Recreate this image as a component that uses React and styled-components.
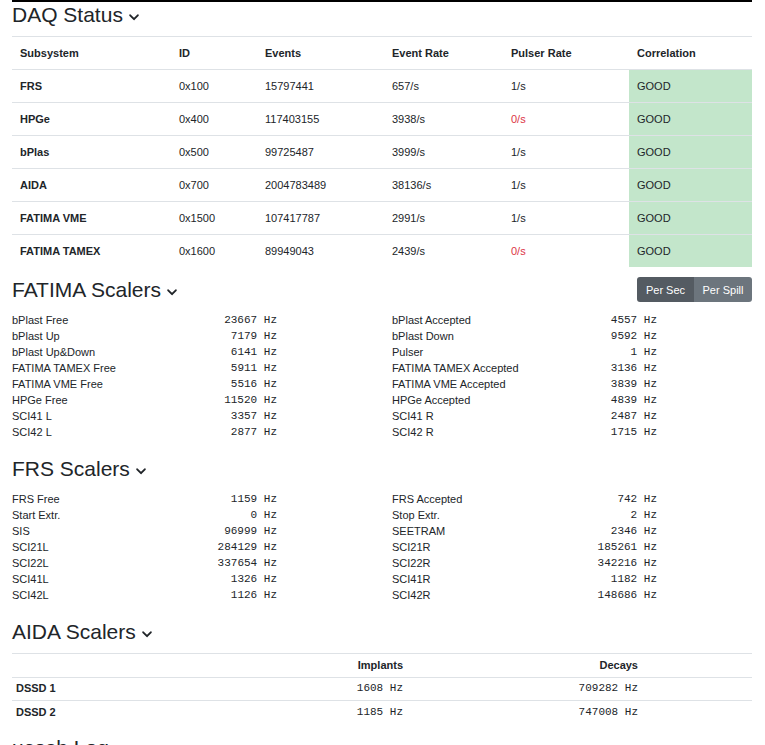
import React from 'react';
import styled, { createGlobalStyle } from 'styled-components';

const GlobalStyle = createGlobalStyle`
    body { margin: 0; background: #fff; color: #212529; font-family: "Liberation Sans", Arial, sans-serif; }
    * { box-sizing: border-box; }
`;

const daqRows = [
    { name: 'FRS', id: '0x100', events: '15797441', rate: '657/s', pulser: '1/s' },
    { name: 'HPGe', id: '0x400', events: '117403155', rate: '3938/s', pulser: '0/s' },
    { name: 'bPlas', id: '0x500', events: '99725487', rate: '3999/s', pulser: '1/s' },
    { name: 'AIDA', id: '0x700', events: '2004783489', rate: '38136/s', pulser: '1/s' },
    { name: 'FATIMA VME', id: '0x1500', events: '107417787', rate: '2991/s', pulser: '1/s' },
    { name: 'FATIMA TAMEX', id: '0x1600', events: '89949043', rate: '2439/s', pulser: '0/s' },
];

// pairs: left column, right column
const fatimaScalers = [
    ['bPlast Free', '23667'], ['bPlast Accepted', '4557'],
    ['bPlast Up', '7179'], ['bPlast Down', '9592'],
    ['bPlast Up&Down', '6141'], ['Pulser', '1'],
    ['FATIMA TAMEX Free', '5911'], ['FATIMA TAMEX Accepted', '3136'],
    ['FATIMA VME Free', '5516'], ['FATIMA VME Accepted', '3839'],
    ['HPGe Free', '11520'], ['HPGe Accepted', '4839'],
    ['SCI41 L', '3357'], ['SCI41 R', '2487'],
    ['SCI42 L', '2877'], ['SCI42 R', '1715'],
];

const frsScalers = [
    ['FRS Free', '1159'], ['FRS Accepted', '742'],
    ['Start Extr.', '0'], ['Stop Extr.', '2'],
    ['SIS', '96999'], ['SEETRAM', '2346'],
    ['SCI21L', '284129'], ['SCI21R', '185261'],
    ['SCI22L', '337654'], ['SCI22R', '342216'],
    ['SCI41L', '1326'], ['SCI41R', '1182'],
    ['SCI42L', '1126'], ['SCI42R', '148686'],
];

const aidaRows = [
    { name: 'DSSD 1', implants: '1608', decays: '709282' },
    { name: 'DSSD 2', implants: '1185', decays: '747008' },
];

const Chevron = () => (
    <ChevronSvg viewBox="0 0 10 7" width="10" height="7">
        <path d="M1.2 1.3 L5 5.2 L8.8 1.3" fill="none" stroke="#212529" strokeWidth="1.9" strokeLinecap="round" strokeLinejoin="round" />
    </ChevronSvg>
);

const Scalers = ({ items }) => (
    <ScalerGrid>
        {items.map(([label, value], i) => (
            <ScalerRow key={i}>
                <span>{label}</span>
                <Mono>{value} Hz</Mono>
            </ScalerRow>
        ))}
    </ScalerGrid>
);

const App = () => {
    return (
        <Page>
            <GlobalStyle />
            <TopRule />

            <SectionHead $mb={9}>
                <Title>DAQ Status<Chevron /></Title>
            </SectionHead>
            <DaqTable>
                <thead>
                    <tr>
                        <Th style={{ width: 159 }}>Subsystem</Th>
                        <Th style={{ width: 86 }}>ID</Th>
                        <Th style={{ width: 127 }}>Events</Th>
                        <Th style={{ width: 119 }}>Event Rate</Th>
                        <Th style={{ width: 126 }}>Pulser Rate</Th>
                        <Th style={{ width: 123 }}>Correlation</Th>
                    </tr>
                </thead>
                <tbody>
                    {daqRows.map(r => (
                        <tr key={r.id}>
                            <Td $bold>{r.name}</Td>
                            <Td>{r.id}</Td>
                            <Td>{r.events}</Td>
                            <Td>{r.rate}</Td>
                            <Td $bad={r.pulser === '0/s'}>{r.pulser}</Td>
                            <Td $good>GOOD</Td>
                        </tr>
                    ))}
                </tbody>
            </DaqTable>

            <SectionHead $mb={10}>
                <Title>FATIMA Scalers<Chevron /></Title>
                <BtnGroup>
                    <Btn $active>Per Sec</Btn>
                    <Btn>Per Spill</Btn>
                </BtnGroup>
            </SectionHead>
            <Scalers items={fatimaScalers} />

            <SectionHead $mb={10}>
                <Title>FRS Scalers<Chevron /></Title>
            </SectionHead>
            <Scalers items={frsScalers} />

            <SectionHead $mb={9}>
                <Title>AIDA Scalers<Chevron /></Title>
            </SectionHead>
            <AidaTable>
                <thead>
                    <tr>
                        <ATh style={{ width: 215 }}></ATh>
                        <ATh style={{ width: 180 }} $right>Implants</ATh>
                        <ATh style={{ width: 235 }} $right>Decays</ATh>
                        <ATh style={{ width: 110 }}></ATh>
                    </tr>
                </thead>
                <tbody>
                    {aidaRows.map(r => (
                        <tr key={r.name}>
                            <ATd $bold>{r.name}</ATd>
                            <ATd $right $mono>{r.implants} Hz</ATd>
                            <ATd $right $mono>{r.decays} Hz</ATd>
                            <ATd></ATd>
                        </tr>
                    ))}
                </tbody>
            </AidaTable>

            <SectionHead $mb={9}>
                <Title>ucesb Log<Chevron /></Title>
            </SectionHead>
            <LogBox />
        </Page>
    );
};

export default App;

const Page = styled.div` padding: 0 13px 0 12px; width: 765px; `;
const TopRule = styled.div` height: 2px; background: #000; `;
const SectionHead = styled.div` display: flex; align-items: center; justify-content: space-between; height: 25px; margin-bottom: ${p => p.$mb}px; `;
const Title = styled.h4` margin: 0; font-size: 21px; font-weight: 400; line-height: 25px; color: #212529; white-space: nowrap; `;
const ChevronSvg = styled.svg` margin-left: 6px; vertical-align: 1px; `;
const DaqTable = styled.table` width: 740px; border-collapse: collapse; table-layout: fixed; margin-bottom: 10px; `;
const Th = styled.th` text-align: left; font-size: 11px; line-height: 16px; font-weight: 700; padding: 8px; border-top: 1px solid #dee2e6; `;
const Td = styled.td` font-size: 11px; line-height: 16px; padding: 8px; border-top: 1px solid #dee2e6; font-weight: ${p => p.$bold ? 700 : 400}; color: ${p => p.$bad ? '#dc3545' : '#212529'}; background: ${p => p.$good ? '#c3e6cb' : 'transparent'}; `;
const BtnGroup = styled.div` display: flex; border-radius: 3px; overflow: hidden; height: 25px; `;
const Btn = styled.button` border: none; margin: 0; padding: 0 8px; font-family: "Liberation Sans", Arial, sans-serif; font-size: 11px; color: #fff; background: ${p => p.$active ? '#545b62' : '#6c757d'}; width: ${p => p.$active ? 57 : 58}px; cursor: pointer; `;
const ScalerGrid = styled.div` display: grid; grid-template-columns: 380px 360px; margin-bottom: 16px; `;
const ScalerRow = styled.div` display: grid; grid-template-columns: 185px 80px; font-size: 11px; line-height: 16px; white-space: nowrap; `;
const Mono = styled.span` font-family: "Liberation Mono", "Courier New", monospace; text-align: right; `;
const AidaTable = styled.table` width: 740px; border-collapse: collapse; table-layout: fixed; margin-bottom: 11px; `;
const ATh = styled.th` text-align: ${p => p.$right ? 'right' : 'left'}; font-size: 11px; line-height: 15.5px; font-weight: 700; padding: 3.5px 4px; border-top: 1px solid #dee2e6; `;
const ATd = styled.td` text-align: ${p => p.$right ? 'right' : 'left'}; font-size: 11px; line-height: 15.5px; padding: 3.5px 4px; border-top: 1px solid #dee2e6; font-weight: ${p => p.$bold ? 700 : 400}; font-family: ${p => p.$mono ? '"Liberation Mono", "Courier New", monospace' : 'inherit'}; `;
const LogBox = styled.div` height: 200px; `;
